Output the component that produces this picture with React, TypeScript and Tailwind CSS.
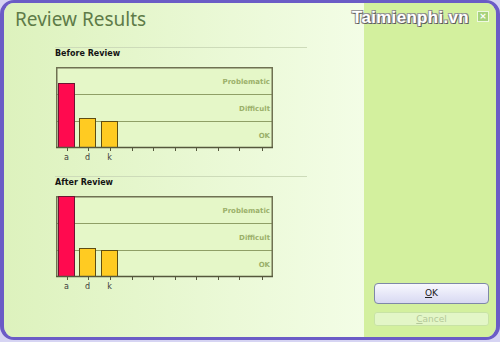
type Bar = { label: string; x: number; top: number; red?: boolean };

const ticks = [13, 34, 56, 78, 99, 121, 142, 164, 185, 208];

function Chart({ bars }: { bars: Bar[] }) {
  return (
    <svg width={224} height={100} className="block" fontFamily="'DejaVu Sans', sans-serif">
      <rect x={2} y={3} width={217} height={80} fill="#e5f7c8" />
      <line x1={2} y1={30.5} x2={219} y2={30.5} stroke="#8f9f66" strokeWidth={1} />
      <line x1={2} y1={57.5} x2={219} y2={57.5} stroke="#8f9f66" strokeWidth={1} />
      {/* frame */}
      <path d="M2.75 83 V3.75 H218.25 V83" fill="none" stroke="#6f7152" strokeWidth={1.5} />
      {bars.map((b) => (
        <rect
          key={b.label}
          x={b.x + 0.5}
          y={b.top + 0.5}
          width={16}
          height={83 - b.top}
          fill={b.red ? "#ff0a4f" : "#ffcb22"}
          stroke={b.red ? "#6b1631" : "#5e4d12"}
          strokeWidth={1}
        />
      ))}
      <line x1={2} y1={83.5} x2={219} y2={83.5} stroke="#55573c" strokeWidth={1.5} />
      {ticks.map((t) => (
        <line key={t} x1={t + 0.5} y1={84} x2={t + 0.5} y2={87} stroke="#55573c" strokeWidth={1} />
      ))}
      {bars.map((b) => (
        <text key={b.label} x={b.x + 8.5} y={96} fontSize={8} fill="#3a3a3a" textAnchor="middle">
          {b.label}
        </text>
      ))}
      <g fontSize={7} fontWeight="bold" fill="#9bb06a" textAnchor="end">
        <text x={216} y={19.5}>Problematic</text>
        <text x={216} y={46.5}>Difficult</text>
        <text x={216} y={73.5}>OK</text>
      </g>
    </svg>
  );
}

function Section({ title, bars, className = "" }: { title: string; bars: Bar[]; className?: string }) {
  return (
    <div className={`pl-[50px] ${className}`}>
      <div className="ml-px h-px w-[252px] bg-[#cddbb9]" />
      <div className="h-[16px] pl-px font-['DejaVu_Sans',sans-serif] text-[8px] font-bold leading-[12px] text-[#141414]">
        {title}
      </div>
      <Chart bars={bars} />
    </div>
  );
}

export default function App() {
  return (
    <div className="h-[342px] w-[500px] bg-[#d6d4f3]">
      <div className="relative flex h-[340px] w-[500px] overflow-hidden rounded-[14px] border-x-4 border-y-[3px] border-[#6b5cc6]">
        {/* Left: results */}
        <div className="flex w-[360px] flex-col bg-gradient-to-r from-[#ddf2bd] to-[#f3fde6]">
          <div className="h-[44px] pl-[11px] pt-[4px]">
            <h1 className="font-['Noto_Sans',sans-serif] text-[19px] leading-[24px] text-[#5e7b48]">Review Results</h1>
          </div>
          <Section
            title="Before Review"
            bars={[
              { label: "a", x: 4, top: 19, red: true },
              { label: "d", x: 25, top: 54 },
              { label: "k", x: 47, top: 57 },
            ]}
          />
          <Section
            title="After Review"
            className="mt-[12px]"
            bars={[
              { label: "a", x: 4, top: 3, red: true },
              { label: "d", x: 25, top: 55 },
              { label: "k", x: 47, top: 57 },
            ]}
          />
        </div>

        {/* Right: actions */}
        <div className="flex w-[132px] flex-col justify-end gap-[8px] bg-[#d3f09e] pb-[11px] pl-[10px] pr-[7px]">
          <button className="h-[21px] w-[115px] rounded-[4px] border border-[#7f88a8] bg-gradient-to-b from-[#f8f8fe] to-[#d8d9f2] font-['DejaVu_Sans',sans-serif] text-[9px] leading-none text-[#222]">
            <span className="underline">O</span>K
          </button>
          <button
            disabled
            className="h-[14px] w-[115px] rounded-[3px] border border-[#c8e3a5] bg-[#e3f6c7] font-['DejaVu_Sans',sans-serif] text-[9px] leading-none text-[#b3c898]"
          >
            <span className="underline">C</span>ancel
          </button>
        </div>

        {/* watermark + close */}
        <div className="absolute left-[348px] top-[6px] font-['Liberation_Sans',sans-serif] text-[17px] font-bold leading-[18px] tracking-[0.3px] text-white [text-shadow:1px_1px_0_#5c5c5c,-1px_-1px_0_#9a9a9a,1px_-1px_0_#8a8a8a,-1px_1px_0_#8a8a8a]">
          Taimienphi.vn
        </div>
        <div className="absolute left-[473px] top-[8px] flex h-[11px] w-[12px] items-center justify-center border border-[#eef8e0] bg-[#a6d27c] font-['DejaVu_Sans',sans-serif] text-[9px] font-bold leading-none text-white">
          ×
        </div>
      </div>
    </div>
  );
}
